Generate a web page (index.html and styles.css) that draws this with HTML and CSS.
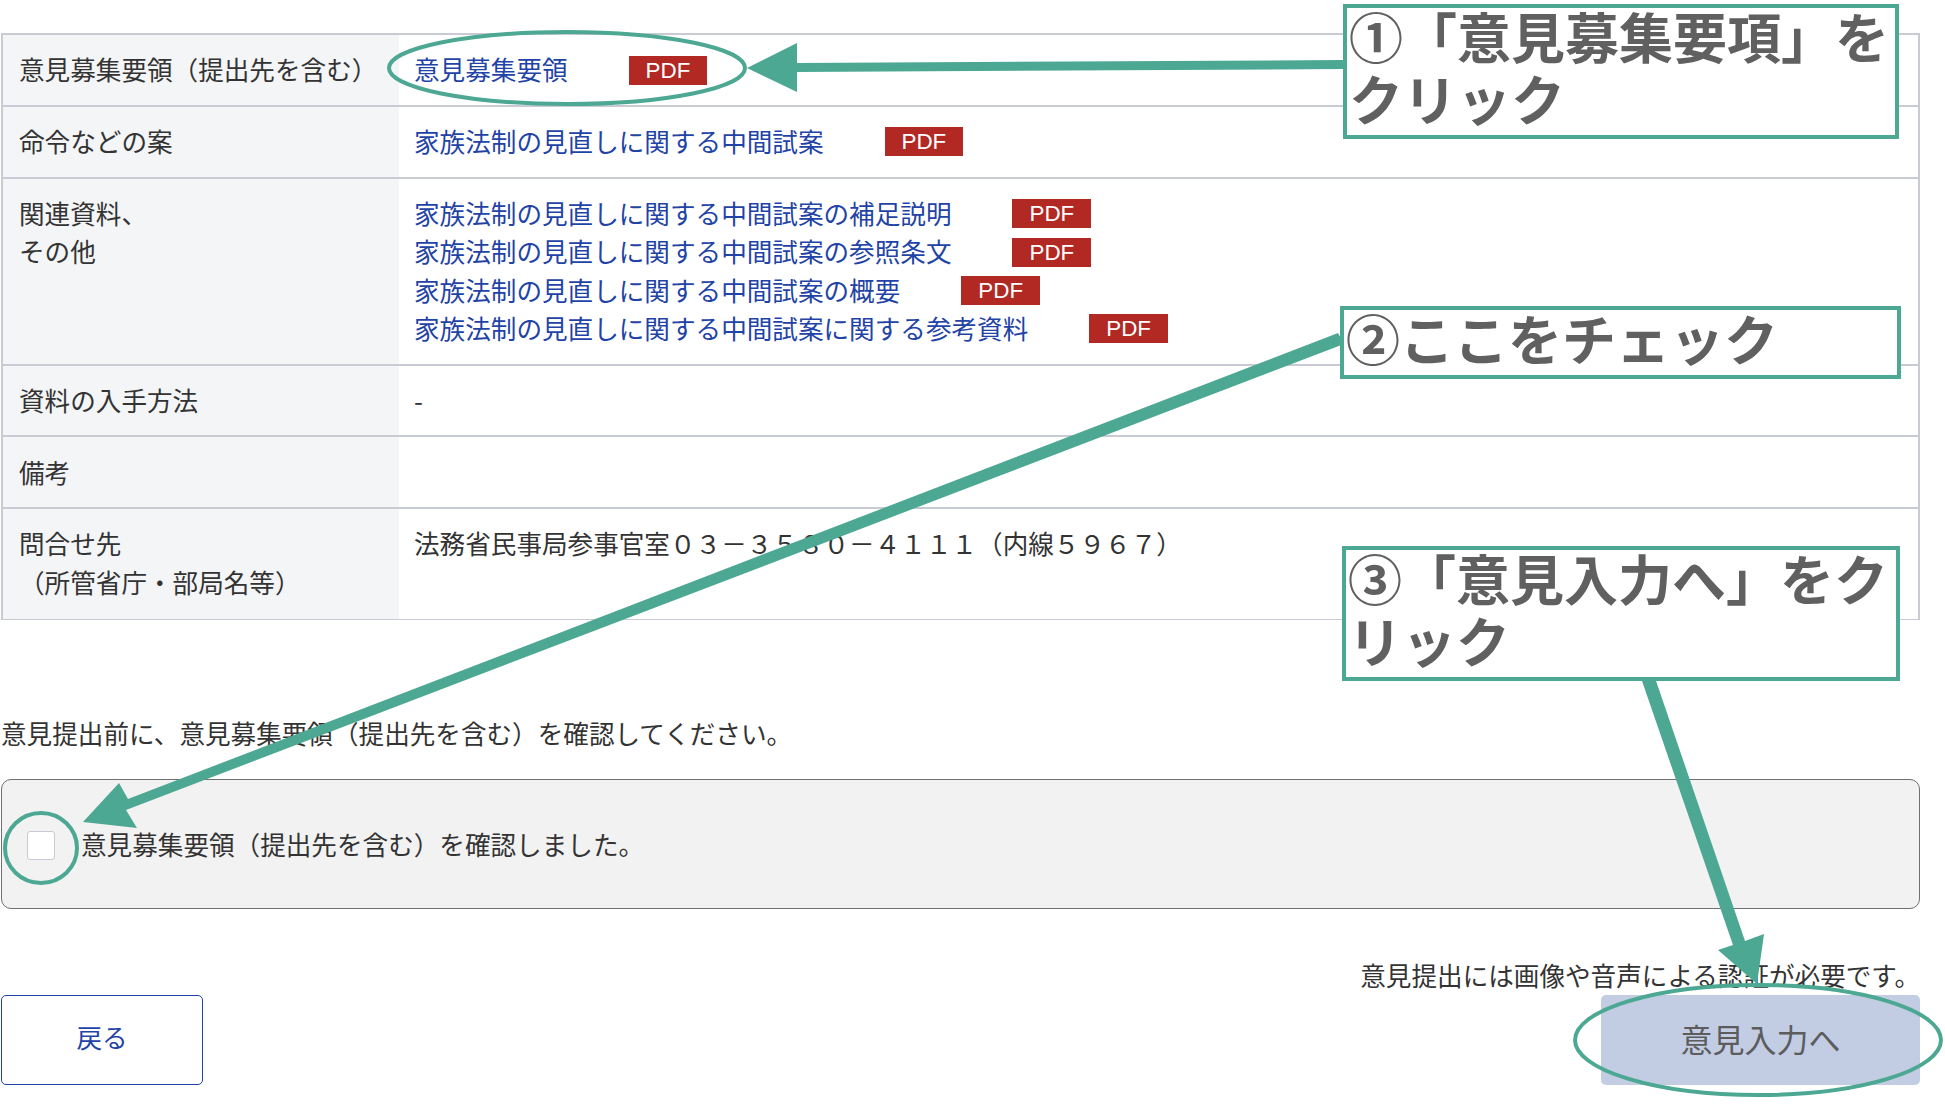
FILE: index.html
```html
<!DOCTYPE html>
<html lang="ja">
<head>
    <meta charset="UTF-8">
    <meta name="viewport" content="width=device-width, initial-scale=1.0">
    <title>意見提出</title>
    <link rel="stylesheet" href="styles.css">
</head>
<body>

    <div class="container">
        <table class="info-table">
            <tr>
                <th>意見募集要領（提出先を含む）</th>
                <td>
                    <div class="doc-row"><a href="#" class="doc-link">意見募集要領</a><span class="pdf">PDF</span></div>
                </td>
            </tr>
            <tr>
                <th>命令などの案</th>
                <td>
                    <div class="doc-row"><a href="#" class="doc-link">家族法制の見直しに関する中間試案</a><span class="pdf">PDF</span></div>
                </td>
            </tr>
            <tr>
                <th>関連資料、<br>その他</th>
                <td>
                    <div class="doc-row"><a href="#" class="doc-link">家族法制の見直しに関する中間試案の補足説明</a><span class="pdf">PDF</span></div>
                    <div class="doc-row"><a href="#" class="doc-link">家族法制の見直しに関する中間試案の参照条文</a><span class="pdf">PDF</span></div>
                    <div class="doc-row"><a href="#" class="doc-link">家族法制の見直しに関する中間試案の概要</a><span class="pdf">PDF</span></div>
                    <div class="doc-row"><a href="#" class="doc-link">家族法制の見直しに関する中間試案に関する参考資料</a><span class="pdf">PDF</span></div>
                </td>
            </tr>
            <tr>
                <th>資料の入手方法</th>
                <td>-</td>
            </tr>
            <tr>
                <th>備考</th>
                <td></td>
            </tr>
            <tr>
                <th>問合せ先<br>（所管省庁・部局名等）</th>
                <td>法務省民事局参事官室０３－３５８０－４１１１（内線５９６７）</td>
            </tr>
        </table>

        <p class="notice">意見提出前に、意見募集要領（提出先を含む）を確認してください。</p>

        <label class="confirm-panel">
            <input type="checkbox" class="confirm-check">
            <span>意見募集要領（提出先を含む）を確認しました。</span>
        </label>

        <div class="actions">
            <a href="#" class="btn btn-back">戻る</a>
            <div class="submit-area">
                <p class="submit-note">意見提出には画像や音声による認証が必要です。</p>
                <a href="#" class="btn btn-submit">意見入力へ</a>
            </div>
        </div>
    </div>

    <!-- Annotations -->
    <svg class="marks" width="1945" height="1119" viewBox="0 0 1945 1119">
        <ellipse class="ring" cx="567" cy="68" rx="178" ry="36"/>
        <ellipse class="ring" cx="41" cy="848" rx="36" ry="35"/>
        <ellipse class="ring" cx="1758" cy="1040" rx="183" ry="55"/>
        <polygon class="arrow" points="1343,60 1343,69 797,72 797,92 747,68 797,43 797,63"/>
        <polygon class="arrow" points="1338,333 1344,344 126,810 137,828 83,822 119,783 128,799"/>
        <polygon class="arrow" points="1641,678 1654,675 1745,941 1764,934 1757,984 1718,950 1733,945"/>
    </svg>

    <div class="callout callout-one"><span class="callout-text">①「意見募集要項」をクリック</span></div>
    <div class="callout callout-two"><span class="callout-text">②ここをチェック</span></div>
    <div class="callout callout-three"><span class="callout-text">③「意見入力へ」をクリック</span></div>

</body>
</html>
```

FILE: styles.css
```css
body {
    font-family: "Noto Sans CJK JP", "Liberation Sans", sans-serif;
    font-size: 25.6px;
    line-height: 1.5;
    margin: 0;
    padding: 0;
    background-color: white;
    color: #333;
}

.container {
    width: 1919px;
    padding: 33px 0 0 1px;
}

/* Info table */
.info-table {
    width: 100%;
    border-collapse: collapse;
    border: 2px solid #c8cad4;
    border-bottom-width: 1px;
}

.info-table th,
.info-table td {
    padding: 15.4px 16px 16px;
    border-bottom: 2px solid #c8cad4;
    vertical-align: top;
    text-align: left;
    font-weight: normal;
}

.info-table th {
    width: 364px;
    background-color: #f4f5f7;
}

.info-table td {
    padding-left: 15px;
}

.info-table tr:last-child th,
.info-table tr:last-child td {
    padding-bottom: 18px;
    border-bottom-width: 1px;
}

.doc-row {
    display: flex;
    align-items: center;
    height: 38.4px;
}

.doc-link {
    color: #1f43a6;
    text-decoration: none;
}

.pdf {
    margin: 1px 0 0 61px;
    padding: 0 17px;
    height: 29px;
    line-height: 29px;
    background-color: #b22823;
    color: white;
    font-family: "Liberation Sans", sans-serif;
    font-size: 22.4px;
}

.notice {
    margin: 94px 0 26.6px;
}

/* Confirm checkbox */
.confirm-panel {
    display: flex;
    align-items: center;
    height: 130px;
    box-sizing: border-box;
    padding-left: 25px;
    background-color: #f2f2f2;
    border: 1px solid #707070;
    border-radius: 10px;
}

.confirm-check {
    appearance: none;
    width: 28px;
    height: 29px;
    margin: 3px 26px 0 0;
    background-color: white;
    border: 1px solid #c8cad4;
    border-radius: 3px;
}

/* Buttons */
.actions {
    display: flex;
    justify-content: space-between;
    align-items: flex-end;
    margin-top: 47px;
}

.submit-area {
    display: flex;
    flex-direction: column;
    align-items: flex-end;
}

.submit-note {
    margin: 0;
}

.btn {
    display: flex;
    justify-content: center;
    align-items: center;
    height: 90px;
    box-sizing: border-box;
    padding-bottom: 4px;
    border-radius: 5px;
    text-decoration: none;
}

.btn-back {
    width: 202px;
    background-color: white;
    border: 1px solid #1f43a6;
    color: #1f43a6;
}

.btn-submit {
    width: 319px;
    background-color: #c2cde4;
    color: #5c5c5c;
    font-size: 32px;
}

/* Annotations */
.marks {
    position: absolute;
    left: 0;
    top: 0;
}

.ring {
    fill: none;
    stroke: #4ca892;
    stroke-width: 4;
}

.arrow {
    fill: #4ca892;
}

.callout {
    position: absolute;
    box-sizing: border-box;
    width: 558px;
    padding: 0 2px;
    background-color: white;
    border: 4px solid #4ca892;
    color: #606060;
    font-size: 54px;
    font-weight: bold;
    line-height: 62px;
}

.callout-text {
    display: block;
    margin-top: -3px;
}

.callout-one {
    left: 1343px;
    top: 4px;
    width: 556px;
    height: 135px;
}

.callout-two {
    left: 1340px;
    top: 306px;
    width: 561px;
    height: 73px;
}

.callout-three {
    left: 1342px;
    top: 546px;
    height: 135px;
}
```
